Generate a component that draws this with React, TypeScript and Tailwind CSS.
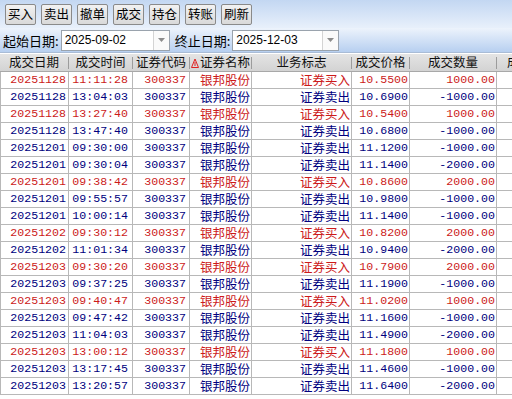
import React from "react";

type Row = [string, string, boolean, string, string];

const rows: Row[] = [
  ["20251128", "11:11:28", true, "10.5500", "1000.00"],
  ["20251128", "13:04:03", false, "10.6900", "-1000.00"],
  ["20251128", "13:27:40", true, "10.5400", "1000.00"],
  ["20251128", "13:47:40", false, "10.6800", "-1000.00"],
  ["20251201", "09:30:00", false, "11.1200", "-1000.00"],
  ["20251201", "09:30:04", false, "11.1400", "-2000.00"],
  ["20251201", "09:38:42", true, "10.8600", "2000.00"],
  ["20251201", "09:55:57", false, "10.9800", "-1000.00"],
  ["20251201", "10:00:14", false, "11.1400", "-1000.00"],
  ["20251202", "09:30:12", true, "10.8200", "2000.00"],
  ["20251202", "11:01:34", false, "10.9400", "-2000.00"],
  ["20251203", "09:30:20", true, "10.7900", "2000.00"],
  ["20251203", "09:37:25", false, "11.1900", "-1000.00"],
  ["20251203", "09:40:47", true, "11.0200", "1000.00"],
  ["20251203", "09:47:42", false, "11.1600", "-1000.00"],
  ["20251203", "11:04:03", false, "11.4900", "-2000.00"],
  ["20251203", "13:00:12", true, "11.1800", "1000.00"],
  ["20251203", "13:17:45", false, "11.4600", "-1000.00"],
  ["20251203", "13:20:57", false, "11.6400", "-2000.00"],
];

const buttons = ["买入", "卖出", "撤单", "成交", "持仓", "转账", "刷新"];

const CJK = "font-['Noto_Sans_CJK_SC',sans-serif]";
const MONO = "font-['Liberation_Mono','DejaVu_Sans_Mono',monospace]";

function Combo({ value, width }: { value: string; width: string }) {
  return (
    <div className={`${width} h-[21px] flex bg-white border border-[#9aa3ad]`}>
      <div className="flex-1 flex items-center pl-[3px] text-[12px] leading-none text-black font-['Liberation_Sans',sans-serif]">
        {value}
      </div>
      <div className="w-[16px] flex items-center justify-center border-l border-[#d4d4d4] bg-[#fafafa]">
        <svg width="7" height="4" viewBox="0 0 7 4">
          <polygon points="0,0 7,0 3.5,4" fill="#8c8c8c" />
        </svg>
      </div>
    </div>
  );
}

const cols = [
  { w: "w-[69px]", label: "成交日期" },
  { w: "w-[64px]", label: "成交时间" },
  { w: "w-[57px]", label: "证券代码" },
  { w: "w-[62px]", label: "证券名称", mark: true },
  { w: "w-[100px]", label: "业务标志" },
  { w: "w-[58px]", label: "成交价格" },
  { w: "w-[87px]", label: "成交数量" },
];

const cell = "shrink-0 border-r border-[#b8b8b8] flex items-center justify-end leading-none";

export default function App() {
  return (
    <div className={`w-[512px] h-[399px] overflow-hidden bg-white ${CJK}`}>
      {/* toolbar */}
      <div className="h-[28px] flex items-center gap-[5px] pl-[5px] bg-gradient-to-b from-[#c3d7f2] to-[#e8f0fb]">
        {buttons.map((b) => (
          <div
            key={b}
            className="w-[31px] h-[21px] flex items-center justify-center text-[12.5px] leading-none text-black border border-[#8a8a8a] rounded-[2px] bg-gradient-to-b from-[#f2f2f2] to-[#d9d9d9]"
          >
            {b}
          </div>
        ))}
      </div>
      {/* date row */}
      <div className="h-[25px] flex items-center bg-gradient-to-b from-[#edf3fc] to-[#b7cff0] border-b border-[#a9bcd6]">
        <span className="ml-[3px] text-[13px] leading-none text-black">起始日期:</span>
        <div className="ml-[2px]">
          <Combo value="2025-09-02" width="w-[109px]" />
        </div>
        <span className="ml-[5px] text-[13px] leading-none text-black">终止日期:</span>
        <div className="ml-[2px]">
          <Combo value="2025-12-03" width="w-[107px]" />
        </div>
      </div>
      {/* header */}
      <div className="h-[19px] flex bg-gradient-to-b from-[#e4e4e4] to-[#d3d3d3] border-t border-white border-b border-b-[#a8a8a8]">
        {cols.map((c) => (
          <div key={c.label} className={`${c.w} shrink-0 flex items-center`}>
            <div className="flex-1 flex items-center justify-center text-[12.5px] text-[#111] leading-none">
              {c.mark && (
                <svg width="8" height="10" viewBox="0 0 8 10" className="mr-[1px]">
                  <polygon points="4,1 7.5,9.5 0.5,9.5" fill="none" stroke="#e02020" strokeWidth="1" />
                  <line x1="4" y1="4" x2="4" y2="8" stroke="#e02020" strokeWidth="1" />
                </svg>
              )}
              {c.label}
            </div>
            <div className="w-[1px] h-[12px] bg-[#9c9c9c]" />
          </div>
        ))}
        <div className="flex-1 min-w-0 flex items-center pl-[10px] text-[12.5px] text-[#111] leading-none overflow-hidden whitespace-nowrap">
          成
        </div>
      </div>
      {/* rows */}
      <div className="flex flex-col">
        {rows.map((r, i) => {
          const color = r[2] ? "text-[#cc1a1a]" : "text-[#00007e]";
          return (
            <div key={i} className={`h-[17px] flex border-b border-[#b8b8b8] ${color}`}>
              <div className={`w-[69px] border-l ${cell} pr-[2px] text-[11.6px] ${MONO}`}>{r[0]}</div>
              <div className={`w-[64px] ${cell} pr-[4px] text-[11.6px] ${MONO}`}>{r[1]}</div>
              <div className={`w-[57px] ${cell} pr-[3px] text-[11.6px] ${MONO}`}>300337</div>
              <div className={`w-[62px] ${cell} pr-[1px] text-[12.5px]`}>银邦股份</div>
              <div className={`w-[100px] ${cell} pr-[1px] text-[12.5px]`}>{r[2] ? "证券买入" : "证券卖出"}</div>
              <div className={`w-[58px] ${cell} pr-[1px] text-[11.6px] ${MONO}`}>{r[3]}</div>
              <div className={`w-[87px] ${cell} pr-[1px] text-[11.6px] ${MONO}`}>{r[4]}</div>
              <div className="flex-1" />
            </div>
          );
        })}
      </div>
    </div>
  );
}
